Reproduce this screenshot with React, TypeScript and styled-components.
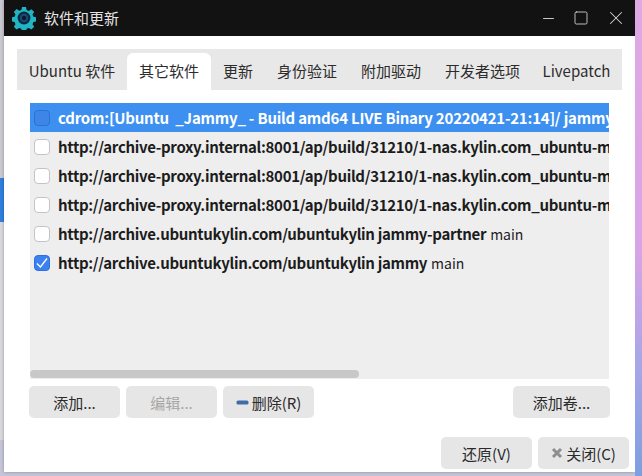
import React from "react";
import styled, { createGlobalStyle } from "styled-components";
import { Minus, Square, X } from "lucide-react";

const GlobalStyle = createGlobalStyle`
  html, body {
    margin: 0;
    padding: 0;
    width: 642px;
    height: 476px;
    overflow: hidden;
  }
  body {
    font-family: "Noto Sans CJK SC", "Noto Sans", sans-serif;
  }
`;

const Desktop = styled.div`
  width: 642px;
  height: 476px;
  box-sizing: border-box;
  padding: 0 7px 4px 4px;
  background: linear-gradient(
    to bottom,
    #c9c9cf 0,
    #c9c9cf 178px,
    #2f7fe0 178px,
    #2f7fe0 222px,
    #d8d8dc 222px,
    #d8d8dc 440px,
    #c4c6d8 440px
  );
  position: relative;
  overflow: hidden;

  &::after {
    content: "";
    position: absolute;
    top: 0;
    right: 0;
    bottom: 0;
    width: 7px;
    background: linear-gradient(to bottom, #dfa9e4 0, #d9a4e6 250px, #a9a6e8 360px, #7d9fe0 476px);
  }
`;

const Window = styled.div`
  width: 631px;
  height: 472px;
  display: flex;
  flex-direction: column;
  background: #ffffff;
  box-shadow: 0 0 3px rgba(0, 0, 0, 0.3);
`;

const TitleBar = styled.header`
  height: 36px;
  flex: none;
  display: flex;
  align-items: center;
  padding: 0 8px 0 8px;
  background: #121212;
  color: #e4e4e4;
`;

const AppIcon = styled.svg`
  width: 24px;
  height: 24px;
  flex: none;
`;

const Title = styled.h1`
  flex: 1;
  margin: 0 0 0 8px;
  font-size: 15px;
  font-weight: 400;
  line-height: 20px;
`;

const WindowButtons = styled.div`
  display: flex;
  align-items: center;
  gap: 16px;
  color: #d8d8d8;
`;

const Body = styled.main`
  flex: 1;
  min-height: 0;
  display: flex;
  flex-direction: column;
  padding: 13px 6px 3px 13px;
`;

const TabBar = styled.nav`
  height: 41px;
  width: 605px;
  box-sizing: border-box;
  flex: none;
  display: flex;
  align-items: flex-end;
  background: #e8e8e8;
`;

const Tab = styled.div<{ $active?: boolean; $width: number }>`
  width: ${(p) => p.$width}px;
  height: 37px;
  display: flex;
  align-items: center;
  justify-content: center;
  box-sizing: border-box;
  padding-bottom: 2px;
  flex: none;
  border-radius: 6px 6px 0 0;
  background: ${(p) => (p.$active ? "#ffffff" : "transparent")};
  color: #2c2c2c;
  font-size: 15px;
  white-space: nowrap;
`;

const Panel = styled.section`
  flex: 1;
  display: flex;
  flex-direction: column;
  padding: 13px 13px 0 13px;
`;

const List = styled.div`
  position: relative;
  height: 276px;
  width: 579px;
  flex: none;
  background: #eeeeee;
  overflow: hidden;
`;

const Row = styled.div<{ $selected?: boolean }>`
  height: 29px;
  display: flex;
  align-items: center;
  padding-left: 4px;
  background: ${(p) => (p.$selected ? "#3d90f0" : "transparent")};
  color: ${(p) => (p.$selected ? "#ffffff" : "#1c1c1c")};
  font-size: 15px;
  white-space: nowrap;
  overflow: hidden;
`;

const CheckBox = styled.span<{ $checked?: boolean; $selected?: boolean }>`
  width: 16px;
  height: 16px;
  flex: none;
  box-sizing: border-box;
  display: flex;
  align-items: center;
  justify-content: center;
  margin-right: 8px;
  border-radius: 4px;
  border: 1px solid
    ${(p) => (p.$selected ? "#2f6fd0" : p.$checked ? "#2f70e0" : "#c4c4c4")};
  background: ${(p) =>
    p.$checked ? "#3b82ee" : p.$selected ? "#3d86e8" : "#ffffff"};
`;

const Strong = styled.strong<{ $selected?: boolean }>`
  font-weight: 700;
  letter-spacing: ${(p) => (p.$selected ? "-0.22px" : "-0.32px")};
`;

const Component = styled.span`
  font-weight: 400;
  margin-left: 4px;
  font-size: 14px;
`;

const ScrollThumb = styled.div`
  position: absolute;
  left: 0;
  bottom: 1px;
  width: 329px;
  height: 8px;
  border-radius: 4px;
  background: #c8c8c8;
`;

const ActionRow = styled.div`
  display: flex;
  gap: 6px;
  margin: 7px -1px 0 -1px;
  width: 581px;
`;

const Button = styled.button<{ $width?: number; $push?: boolean }>`
  width: ${(p) => p.$width ?? 91}px;
  height: 32px;
  flex: none;
  display: flex;
  align-items: center;
  justify-content: center;
  gap: 3px;
  padding: 0;
  margin-left: ${(p) => (p.$push ? "auto" : "0")};
  border: none;
  border-radius: 5px;
  background: #e6e6e6;
  color: ${(p) => (p.disabled ? "#a6a6a6" : "#2a2a2a")};
  font-family: inherit;
  font-size: 15px;
`;

const FooterRow = styled.footer`
  display: flex;
  justify-content: flex-end;
  gap: 6px;
  margin: 19px -13px 0 0;
`;

const GearIcon = () => (
  <AppIcon viewBox="0 0 24 24" aria-hidden>
    <path
      fill="#1fb5c4"
      d="M10 1h4l.6 3 2.2.9 2.6-1.7 2.8 2.8-1.7 2.6.9 2.2 3 .6v4l-3 .6-.9 2.2 1.7 2.6-2.8 2.8-2.6-1.7-2.2.9-.6 3h-4l-.6-3-2.2-.9-2.6 1.7-2.8-2.8 1.7-2.6-.9-2.2-3-.6v-4l3-.6.9-2.2L1.8 5.9l2.8-2.8 2.6 1.7L9.4 3.9z"
    />
    <circle cx="12" cy="12" r="6.4" fill="#10283f" />
    <circle cx="12" cy="12" r="4.2" fill="#1a4a78" />
    <circle cx="12" cy="12" r="2.2" fill="#0b1a2c" />
  </AppIcon>
);

const CheckMark = () => (
  <svg width="14" height="14" viewBox="0 0 14 14" aria-hidden>
    <path d="M2 7.5 5.4 11 12 2.5" fill="none" stroke="#ffffff" strokeWidth="1.3" />
  </svg>
);

const RemoveIcon = () => (
  <svg width="13" height="5" viewBox="0 0 13 5" aria-hidden>
    <rect x="0.5" y="0.5" width="12" height="4" rx="1.5" fill="#3f6ea6" />
  </svg>
);

const CloseIcon = () => (
  <svg width="12" height="12" viewBox="0 0 12 12" aria-hidden>
    <path d="M2 2 10 10M10 2 2 10" stroke="#8e8e8e" strokeWidth="3" />
  </svg>
);

const tabs = [
  { label: "Ubuntu 软件", width: 110 },
  { label: "其它软件", width: 84, active: true },
  { label: "更新", width: 54 },
  { label: "身份验证", width: 84 },
  { label: "附加驱动", width: 84 },
  { label: "开发者选项", width: 99 },
  { label: "Livepatch", width: 89 },
];

const proxyUrl =
  "http://archive-proxy.internal:8001/ap/build/31210/1-nas.kylin.com_ubuntu-mirror/ jammy main";

const sources = [
  {
    strong: "cdrom:[Ubuntu \u00a0_Jammy_ - Build amd64 LIVE Binary 20220421-21:14]/ jammy main restricted",
    selected: true,
  },
  { strong: proxyUrl },
  { strong: proxyUrl },
  { strong: proxyUrl },
  { strong: "http://archive.ubuntukylin.com/ubuntukylin jammy-partner", extra: "main" },
  { strong: "http://archive.ubuntukylin.com/ubuntukylin jammy", extra: "main", checked: true },
];

export default function App() {
  return (
    <>
      <GlobalStyle />
      <Desktop>
        <Window>
          <TitleBar>
            <GearIcon />
            <Title>软件和更新</Title>
            <WindowButtons>
              <Minus size={17} strokeWidth={1.3} />
              <Square size={16} strokeWidth={1.3} />
              <X size={22} strokeWidth={1.1} />
            </WindowButtons>
          </TitleBar>
          <Body>
            <TabBar>
              {tabs.map((tab) => (
                <Tab key={tab.label} $active={tab.active} $width={tab.width}>
                  {tab.label}
                </Tab>
              ))}
            </TabBar>
            <Panel>
              <List>
                {sources.map((source, i) => (
                  <Row key={i} $selected={source.selected}>
                    <CheckBox $checked={source.checked} $selected={source.selected}>
                      {source.checked && <CheckMark />}
                    </CheckBox>
                    <Strong $selected={source.selected}>{source.strong}</Strong>
                    {source.extra && <Component>{source.extra}</Component>}
                  </Row>
                ))}
                <ScrollThumb />
              </List>
              <ActionRow>
                <Button>添加...</Button>
                <Button disabled>编辑...</Button>
                <Button>
                  <RemoveIcon />
                  删除(R)
                </Button>
                <Button $push $width={97}>
                  添加卷...
                </Button>
              </ActionRow>
              <FooterRow>
                <Button>还原(V)</Button>
                <Button>
                  <CloseIcon />
                  关闭(C)
                </Button>
              </FooterRow>
            </Panel>
          </Body>
        </Window>
      </Desktop>
    </>
  );
}
